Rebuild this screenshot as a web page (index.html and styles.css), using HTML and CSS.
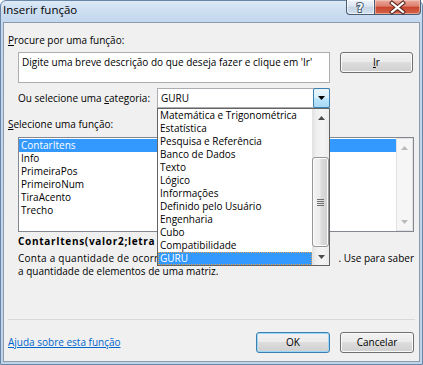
FILE: index.html
```html
<!DOCTYPE html>
<html lang="pt">
<head>
<meta charset="utf-8">
<title>Inserir função</title>
<link rel="stylesheet" href="styles.css">
</head>
<body>
<div class="window">
  <div class="titlebar">
    <span class="title">Inserir função</span>
    <div class="caption">
      <div class="cbtn help">
        <svg width="28" height="15" viewBox="0 0 28 15"><text x="14" y="12" text-anchor="middle" class="qmark">?</text></svg>
      </div>
      <div class="cbtn close">
        <svg width="47" height="15" viewBox="0 0 47 15">
          <path d="M18 3 L29 12 M29 3 L18 12" class="x-out"/>
          <path d="M18 3 L29 12 M29 3 L18 12" class="x-in"/>
        </svg>
      </div>
    </div>
  </div>
  <div class="client">
    <div class="label l-search"><u>P</u>rocure por uma função:</div>
    <div class="search-row">
      <div class="searchbox">Digite uma breve descrição do que deseja fazer e clique em 'Ir'</div>
      <button class="btn btn-ir"><u>I</u>r</button>
    </div>
    <div class="cat-row">
      <span class="cat-label">Ou selecione uma <u>c</u>ategoria:</span>
      <div class="combo">
        <span class="combo-val">GURU</span>
        <span class="combo-btn">
          <svg width="7" height="4" viewBox="0 0 7 4"><path d="M0 0 H7 L3.5 4 Z" fill="#000"/></svg>
        </span>
        <div class="dropdown">
          <div class="dd-items">
            <div class="item">Matemática e Trigonométrica</div>
            <div class="item">Estatística</div>
            <div class="item">Pesquisa e Referência</div>
            <div class="item">Banco de Dados</div>
            <div class="item">Texto</div>
            <div class="item">Lógico</div>
            <div class="item">Informações</div>
            <div class="item">Definido pelo Usuário</div>
            <div class="item">Engenharia</div>
            <div class="item">Cubo</div>
            <div class="item">Compatibilidade</div>
            <div class="item item-sel item-focus">GURU</div>
          </div>
          <div class="sbar">
            <div class="sb-arrow">
              <svg width="7" height="4" viewBox="0 0 7 4"><path d="M0 4 H7 L3.5 0 Z" class="arr"/></svg>
            </div>
            <div class="sb-track">
              <div class="thumb">
                <svg width="7" height="7" viewBox="0 0 7 7" class="grip"><path d="M0 0.5 H7 M0 2.5 H7 M0 4.5 H7 M0 6.5 H7"/></svg>
              </div>
            </div>
            <div class="sb-arrow">
              <svg width="7" height="4" viewBox="0 0 7 4"><path d="M0 0 H7 L3.5 4 Z" class="arr"/></svg>
            </div>
          </div>
        </div>
      </div>
    </div>
    <div class="label l-func"><u>S</u>elecione uma função:</div>
    <div class="funclist">
      <div class="fl-items">
        <div class="item item-sel">ContarItens</div>
        <div class="item">Info</div>
        <div class="item">PrimeiraPos</div>
        <div class="item">PrimeiroNum</div>
        <div class="item">TiraAcento</div>
        <div class="item">Trecho</div>
      </div>
      <div class="sbar sbar-off">
        <div class="sb-arrow">
          <svg width="7" height="4" viewBox="0 0 7 4"><path d="M0 4 H7 L3.5 0 Z" class="arr"/></svg>
        </div>
        <div class="sb-track"></div>
        <div class="sb-arrow">
          <svg width="7" height="4" viewBox="0 0 7 4"><path d="M0 0 H7 L3.5 4 Z" class="arr"/></svg>
        </div>
      </div>
    </div>
    <div class="sig"><span class="clip">ContarItens(valor2;letra</span></div>
    <div class="desc">
      <div class="desc-line"><span class="clip">Conta a quantidade de ocorr</span><span class="desc-b">. Use para saber</span></div>
      <div class="desc-line">a quantidade de elementos de uma matriz.</div>
    </div>
    <div class="separator"></div>
    <div class="bottom-row">
      <a class="help-link" href="#">Ajuda sobre esta função</a>
      <button class="btn btn-default">OK</button>
      <button class="btn">Cancelar</button>
    </div>
  </div>
</div>
</body>
</html>
```

FILE: styles.css
```css
* { box-sizing: border-box; }
html, body { margin: 0; padding: 0; }
body {
  width: 423px;
  height: 365px;
  overflow: hidden;
  background: #ffffff;
  font-family: "Open Sans", "Noto Sans", sans-serif;
  font-size: 10px;
  color: #000;
}
.window {
  width: 423px;
  height: 365px;
  display: flex;
  flex-direction: column;
  border: 1px solid #6a86a6;
  border-radius: 6px 6px 0 0;
  background: linear-gradient(to bottom, #dce9f7 0, #cddef1 10px, #c3d7ed 22px, #bfd4eb 100%);
}
.titlebar {
  height: 21px;
  flex: none;
  display: flex;
  align-items: flex-start;
  padding-right: 1px;
}
.title {
  flex: 1;
  font-size: 11.5px;
  line-height: 18px;
  padding-left: 2px;
  color: #000;
}
.caption {
  display: flex;
  margin-top: -1px;
}
.cbtn {
  height: 15px;
  border: 1px solid #4b5d73;
  border-top: none;
  display: flex;
}
.cbtn svg { display: block; margin: 0 -1px; }
.help {
  width: 28px;
  border-right: none;
  border-radius: 0 0 0 4px;
  background: linear-gradient(to bottom, #eef3f9 0, #dbe5f0 45%, #c6d4e4 50%, #d3e0ee 100%);
  box-shadow: inset 0 0 0 1px rgba(255,255,255,0.6);
}
.close {
  width: 47px;
  border-radius: 0 0 4px 0;
  background: linear-gradient(to bottom, #e9aa9e 0, #dd7f6d 45%, #c8432c 50%, #d5654b 100%);
  box-shadow: inset 0 0 0 1px rgba(255,220,210,0.5);
}
.qmark {
  font-family: "DejaVu Sans", sans-serif;
  font-size: 12px;
  font-weight: bold;
  fill: #ffffff;
  stroke: #44566c;
  stroke-width: 2px;
  paint-order: stroke;
}
.x-out { stroke: #5a2a22; stroke-width: 4.2; fill: none; stroke-linecap: square; }
.x-in { stroke: #ffffff; stroke-width: 2.2; fill: none; stroke-linecap: square; }

.client {
  flex: 1;
  margin: 0 2px 2px 2px;
  border: 1px solid #8b9bae;
  background: #f0f0f0;
  padding: 0 5px 8px 4px;
  display: flex;
  flex-direction: column;
}
.label { line-height: 13px; }
.l-search { margin-top: 11px; }
.search-row {
  display: flex;
  align-items: flex-start;
  gap: 10px;
  margin: 5px 0 0 10px;
}
.searchbox {
  width: 312px;
  height: 31px;
  border: 1px solid #abadb3;
  background: #fff;
  padding: 3px 3px;
  line-height: 13px;
}
.btn {
  height: 21px;
  width: 74px;
  padding: 0;
  border: 1px solid #707070;
  border-radius: 3px;
  background: linear-gradient(to bottom, #f2f2f2 0, #ebebeb 48%, #dddddd 50%, #cfcfcf 100%);
  box-shadow: inset 0 0 0 1px #fbfbfb;
  font-family: inherit;
  font-size: 10px;
  color: #000;
  line-height: 17px;
  text-align: center;
}
.btn-ir { width: 73px; }
.btn-default {
  border-color: #3c7fb1;
  box-shadow: inset 0 0 0 1px #9cd7f7;
}
.cat-row {
  display: flex;
  align-items: center;
  height: 20px;
  margin: 5px 0 0 10px;
}
.cat-label { width: 139px; line-height: 13px; }
.combo {
  position: relative;
  width: 173px;
  height: 20px;
  border: 1px solid #abadb3;
  background: #fff;
  display: flex;
  align-items: center;
  z-index: 2;
}
.combo-val { flex: 1; padding-left: 3px; line-height: 13px; }
.combo-btn {
  width: 17px;
  height: 20px;
  margin: -1px -1px -1px 0;
  border: 1px solid #3c7fb1;
  border-radius: 2px;
  background: linear-gradient(to bottom, #eaf6fd 0, #d9f0fc 48%, #bee6fd 50%, #a7d9f5 100%);
  display: flex;
  align-items: center;
  justify-content: center;
}
.dropdown {
  position: absolute;
  top: 19px;
  left: -1px;
  width: 173px;
  height: 158px;
  border: 1px solid #646464;
  background: #fff;
  display: flex;
}
.dd-items { flex: 1; }
.item {
  height: 13px;
  line-height: 13px;
  padding-left: 2px;
  white-space: nowrap;
}
.item-sel { background: #3399ff; color: #fff; }
.item-focus { outline: 1px dotted #e6a04a; outline-offset: -1px; }
.sbar {
  width: 17px;
  display: flex;
  flex-direction: column;
  background: linear-gradient(to right, #e3e3e3 0, #efefef 20%, #f4f4f4 60%, #ececec 100%);
  border-left: 1px solid #e4e4e4;
}
.sb-arrow {
  height: 17px;
  display: flex;
  align-items: center;
  justify-content: center;
}
.arr { fill: #4d4d4d; }
.sb-track {
  flex: 1;
  display: flex;
  flex-direction: column;
  justify-content: flex-end;
  padding-bottom: 1px;
}
.thumb {
  height: 90px;
  margin: 0 0 0 -1px;
  border: 1px solid #979797;
  border-radius: 3px;
  background: linear-gradient(to right, #f4f4f4 0, #ececec 45%, #dcdcdc 55%, #cfcfcf 100%);
  box-shadow: inset 0 0 0 1px #fbfbfb;
  display: flex;
  align-items: center;
  justify-content: center;
}
.grip path { stroke: #6f6f6f; stroke-width: 1; }
.l-func { margin-top: 10px; }
.funclist {
  margin: 6px 0 0 10px;
  height: 95px;
  border: 1px solid #828790;
  background: #fff;
  display: flex;
}
.fl-items { flex: 1; padding-top: 1px; }
.fl-items .item { padding-left: 2px; }
.sbar-off {
  margin: 0;
  border: 1px solid #e2e2e2;
  background: #f6f6f6;
}
.sbar-off .arr { fill: #b9b9b9; }
.sig {
  margin: 3px 0 0 10px;
  line-height: 13px;
  font-weight: bold;
  white-space: nowrap;
}
.clip {
  display: inline-block;
  width: 139px;
  overflow: hidden;
  white-space: nowrap;
  vertical-align: top;
}
.sig .clip { letter-spacing: 0.7px; }
.desc .clip { letter-spacing: 0.25px; }
.desc { margin: 4px 0 0 10px; line-height: 13px; }
.desc-line { display: flex; white-space: nowrap; }
.desc-b { margin-left: auto; }
.separator {
  margin-top: auto;
  height: 1px;
  background: #d9d9d9;
  margin-right: -1px;
}
.bottom-row {
  margin-top: 12px;
  height: 21px;
  display: flex;
  align-items: center;
  gap: 10px;
}
.help-link {
  flex: 1;
  color: #0066cc;
  text-decoration: underline;
  line-height: 13px;
}
```
